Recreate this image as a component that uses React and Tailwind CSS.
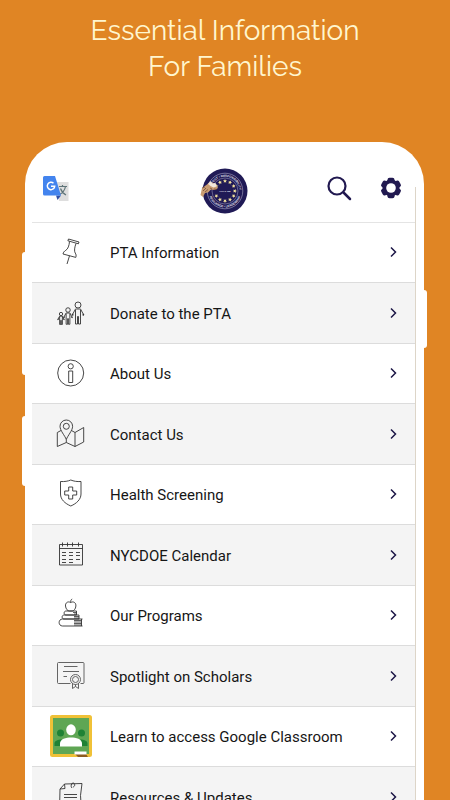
import React from "react";

const PinIcon = () => (
  <>
    <path d="M18.500 8l10.500 3-.6 1.800-10.500-3zM19.500 10.500c-.3 4-1.500 7.500-3.700 8.800-1.500.9-2.500 2-2.800 3.700l12.800 3.400c.6-1.800.3-3.200-.6-4.400-1.200-1.800-.6-6 .8-9.500" />
    <path d="M19.500 24.800l-2.500 8.200" />
  </>
);

const Person = ({ x, y, s }) => (
  <g transform={`translate(${x} ${y}) scale(${s})`} strokeWidth={0.9 / s}>
    <circle cx="0" cy="0" r="3" />
    <path d="M-2.500 4h5l3 5.500M-2.500 4l-3 5.500M-2.500 5v14h2v-7.500h1v7.500h2v-14" />
    <path d="M-5.800 9l1 1.500M5.800 9l-1 1.500" strokeWidth={1.4 / s} />
  </g>
);

const FamilyIcon = () => (
  <>
    <Person x={28} y={13} s={1} />
    <Person x={18} y={18} s={0.75} />
    <Person x={11} y={22} s={0.55} />
  </>
);

const InfoIcon = () => (
  <>
    <circle cx="20.700" cy="21" r="13" />
    <circle cx="20.700" cy="14.300" r="2.600" />
    <path d="M18.700 19h4v11.500h-4z" />
  </>
);

const MapIcon = () => (
  <>
    <path d="M16.300 26.500c-1.500-4-6.300-9-6.300-13.200a6.300 6.300 0 0 1 12.600 0c0 4.200-4.800 9.200-6.300 13.200z" />
    <circle cx="16.300" cy="13.300" r="3" />
    <path d="M11 17.500l-3.700 2v14l9-4 8.700 4 8.700-4.500v-14.500l-8.700 5-3.500-2M16.300 26.500v3M25 19.500v14" />
  </>
);

const ShieldIcon = () => (
  <>
    <path d="M10.500 8.500c4 .3 7.500-.3 10.300-1.500 2.800 1.200 6.200 1.800 10.200 1.500v12.500c0 5.500-4.500 9.500-10.200 12-5.800-2.500-10.300-6.500-10.300-12z" />
    <path d="M18.700 14h4v4h4v4h-4v4h-4v-4h-4v-4h4z" />
  </>
);

const CalendarIcon = () => (
  <>
    <path d="M9.500 10.500h23v20.500h-23zM9.500 14.500h23M12.500 8.500v4M17.500 8.500v4M22.500 8.500v4M28.500 8.500v4" />
    <path d="M12 18.500h4M19 18.500h4M26 18.500h4M12 21.500h4M19 21.500h4M26 21.500h4M12 25.500h4M19 25.500h4M26 25.500h4M12 28.500h4M19 28.500h4" />
  </>
);

const BooksIcon = () => (
  <>
    <path d="M20.700 8.500c-3-1.600-5.500.4-5.200 3.500.3 3 2.200 5 3.700 5h3c1.500 0 3.500-2 3.700-5 .2-3.100-2.200-5.100-5.200-3.500zM20.700 8.500c-.2-1.800.3-3 1.500-3.500" />
    <path d="M26.500 17h-10.500c-2.500 0-2.500 4 0 4h10.500zM29 21h-15c-2.500 0-2.500 4 0 4h15zM32.500 25h-20c-4.500 0-4.500 7 0 7h20M31.500 25v7" />
    <path d="M23 18.500h3.500M24 20h2.500M24 22.500h5M24 24h5M24 26.500h7.500M24 28h7.500M24 29.500h7.500M24 31h7.500" strokeWidth=".8" />
  </>
);

const CertificateIcon = () => (
  <g stroke="#555">
    <path d="M20.500 28.500h-12a1 1 0 0 1-1-1v-19a1 1 0 0 1 1-1h24.500a1 1 0 0 1 1 1v19a1 1 0 0 1-1 1h-2.500" />
    <path d="M14 11.500h13.500M13 16.500h16M13.500 21.500h3.500" />
    <circle cx="25.500" cy="24.500" r="5" />
    <circle cx="25.500" cy="24.500" r="3" />
    <path d="M22.500 28.500v5l3-2 3 2v-5M25.500 29.500v2" />
  </g>
);

const ClassroomIcon = () => (
  <g stroke="none">
    <rect width="42" height="42" rx="2.500" fill="#f0c137" />
    <rect x="3" y="3" width="36" height="36" fill="#5fa654" />
    <g fill="#1f8235">
      <circle cx="10.500" cy="18" r="3.500" />
      <circle cx="31.500" cy="18" r="3.500" />
      <path d="M4.500 31v-2.500c0-3 4-4 7-4s4 1 4 2v4.500zM37.500 31v-2.500c0-3-4-4-7-4s-4 1-4 2v4.500z" />
    </g>
    <ellipse cx="21" cy="14.800" rx="4.800" ry="5.500" fill="#fff" />
    <path d="M10 31.500v-3c0-4.500 6-6 11-6s11 1.500 11 6v3z" fill="#fff" />
    <path d="M25 39h11l2 3h-10z" fill="#8d5b20" />
    <path d="M24.500 36.500h12v3h-12z" fill="#fff" />
  </g>
);

const NoteIcon = () => (
  <>
    <path d="M14.500 8l17.500-.5-1.500 12 1 15h-22l.5-21.500zM14.500 8l.5 4.500-5 .5M22 12c-1.500-1-1-5 1-5s2.500 3.500 0 4" />
    <path d="M14 18.500h13M14 21.500h13M14 24.500h13" />
  </>
);

const menu = [
  { name: "PTA Information", icon: PinIcon },
  { name: "Donate to the PTA", icon: FamilyIcon },
  { name: "About Us", icon: InfoIcon },
  { name: "Contact Us", icon: MapIcon },
  { name: "Health Screening", icon: ShieldIcon },
  { name: "NYCDOE Calendar", icon: CalendarIcon },
  { name: "Our Programs", icon: BooksIcon },
  { name: "Spotlight on Scholars", icon: CertificateIcon },
  { name: "Learn to access Google Classroom", icon: ClassroomIcon },
  { name: "Resources & Updates", icon: NoteIcon },
];

const TranslateIcon = () => (
  <svg width="27" height="26" viewBox="0 0 27 26" aria-hidden="true">
    <path d="M12 6h13.500v19h-9.500z" fill="#dedede" />
    <path d="M16 10.500h8M19.500 9v1.500M22.500 10.500c-.8 4-3 6.500-6 8M17.500 12.500c1 3 3 5 5.500 6.500" fill="none" stroke="#5f7478" strokeWidth="1.200" />
    <path d="M13 19.500h5l-3.500 4.500z" fill="#2f4fa8" />
    <path d="M1.500 0h10.500l6 19.500h-16.500a1.500 1.500 0 0 1-1.500-1.500v-16.500a1.500 1.500 0 0 1 1.500-1.500z" fill="#4384ee" />
    <path d="M10.500 7.200a3.700 3.700 0 1 0 1.200 3h-3.700" fill="none" stroke="#fff" strokeWidth="1.500" />
  </svg>
);

const stars = [0, 30, 60, 90, 120, 150, 180, 210, 240, 300, 330];

const SchoolLogo = () => (
  <svg width="48" height="46" viewBox="-25 -23 48 46" aria-hidden="true">
    <defs>
      <path id="ring-top" d="M-14.200 0a14.200 14.200 0 0 1 28.400 0" />
      <path id="ring-bottom" d="M-16.400 0a16.400 16.400 0 0 0 32.800 0" />
    </defs>
    <circle r="22.500" fill="#201a56" />
    <circle r="17.800" fill="none" stroke="#a9a7c4" strokeWidth=".6" />
    <circle r="13" fill="none" stroke="#a9a7c4" strokeWidth=".5" />
    <g fill="#e4e2ee" fontFamily="Liberation Sans, sans-serif" fontWeight="bold" fontSize="3" textAnchor="middle">
      <text><textPath href="#ring-top" startOffset="50%">RESPECT • RESPONSIBILITY</textPath></text>
      <text><textPath href="#ring-bottom" startOffset="50%">RESILIENCE • LEADERSHIP</textPath></text>
      <text y="1" fontSize="2">P.S./I.S. 208</text>
    </g>
    {stars.map((deg) => (
      <path
        key={deg}
        transform={`rotate(${deg}) translate(0 -10)`}
        d="M0-2l.6 1.300 1.400.1-1.100 1 .4 1.400-1.300-.7-1.300.7.4-1.400-1.100-1 1.400-.1z"
        fill="#efdf9c"
      />
    ))}
    <path d="M-24.500 4l1.500-7 5-3.500 3-3 2 2 3-.5 1.500 3 1.500 2-3 2-4-.5-3 3-3 .5-2 4z" fill="#c99c72" />
    <path d="M-17-7l2.500-3 2 2.500 3-.5 1 3.500-3 1-3-1.500z" fill="#f1e7dc" />
    <path d="M-22 0l3-3M-20 1l3-2.500M-15-3l2 1M-11-2l3 .5M-23-3l3-1" stroke="#6a4530" strokeWidth=".7" />
  </svg>
);

const SearchIcon = () => (
  <svg width="28" height="28" viewBox="0 0 28 28" fill="none" stroke="#211950" aria-hidden="true">
    <circle cx="12" cy="11" r="8.500" strokeWidth="2.200" />
    <path d="M19 18l6 6" strokeWidth="2.500" strokeLinecap="round" />
  </svg>
);

const GearIcon = () => (
  <svg width="28" height="28" viewBox="-14 -13 28 28" fill="#211950" aria-hidden="true">
    <circle r="8.500" />
    {[0, 60, 120, 180, 240, 300].map((deg) => (
      <rect key={deg} x="-3.500" y="-10.300" width="7" height="6" rx="2" transform={`rotate(${deg})`} />
    ))}
    <circle r="4.800" fill="#fff" />
  </svg>
);

const MenuRow = ({ name, icon: Icon }) => (
  <li className="border-b border-[#dcdcdc] odd:h-[60px] even:h-[61px] even:bg-[#f4f4f4]">
    <a href="#" className="flex h-full items-center gap-[18px] pr-[18px] pb-px pl-[18px]">
      <svg width="42" height="42" viewBox="0 0 42 42" fill="none" stroke="#333" strokeWidth=".9" className="shrink-0" aria-hidden="true">
        <Icon />
      </svg>
      <span className="flex-1 pt-0.5 text-[15px] leading-5 whitespace-nowrap text-[#161616]">{name}</span>
      <svg width="7" height="12" viewBox="0 0 7 12" fill="none" stroke="#1d1747" strokeWidth="1.500" aria-hidden="true">
        <path d="M1 1.500l4.500 4.500-4.500 4.500" />
      </svg>
    </a>
  </li>
);

const App = () => {
  return (
    <main className="flex h-screen flex-col overflow-hidden bg-[#e08524] font-['Roboto',sans-serif]">
      <h1 className="h-[142px] shrink-0 pt-[13px] text-center font-['Raleway','Lato',sans-serif] text-[28px] leading-9 font-normal text-[#fff6cf]">
        Essential Information
        <br />
        For Families
      </h1>

      <div className="relative mr-[26px] ml-[25px] min-h-0 flex-1 rounded-t-[42px] bg-white pr-2 pl-[7px]">
        {/* side buttons of the phone */}
        <span className="absolute top-[110px] -left-[3px] h-[123px] w-[3px] rounded-l-sm bg-white" />
        <span className="absolute top-[274px] -left-[3px] h-[70px] w-[3px] rounded-l-sm bg-white" />
        <span className="absolute top-[148px] -right-[3px] h-[58px] w-[3px] rounded-r-sm bg-white" />

        <div className="relative h-full overflow-hidden">
          <span className="absolute top-[45px] right-0 bottom-0 w-px bg-[#ddd5c8]" />
          <header className="grid h-[81px] grid-cols-[1fr_auto_1fr] items-center border-b border-[#e4e4e4] px-[11px] pt-[14px]">
            <button type="button" aria-label="Translate" className="justify-self-start">
              <TranslateIcon />
            </button>
            <a href="#" aria-label="Home" className="pt-1">
              <SchoolLogo />
            </a>
            <div className="flex gap-6 justify-self-end">
              <button type="button" aria-label="Search">
                <SearchIcon />
              </button>
              <button type="button" aria-label="Settings">
                <GearIcon />
              </button>
            </div>
          </header>

          <nav aria-label="Main menu">
            <ul className="mr-px">
              {menu.map((item) => (
                <MenuRow key={item.name} name={item.name} icon={item.icon} />
              ))}
            </ul>
          </nav>
        </div>
      </div>
    </main>
  );
};

export default App;
